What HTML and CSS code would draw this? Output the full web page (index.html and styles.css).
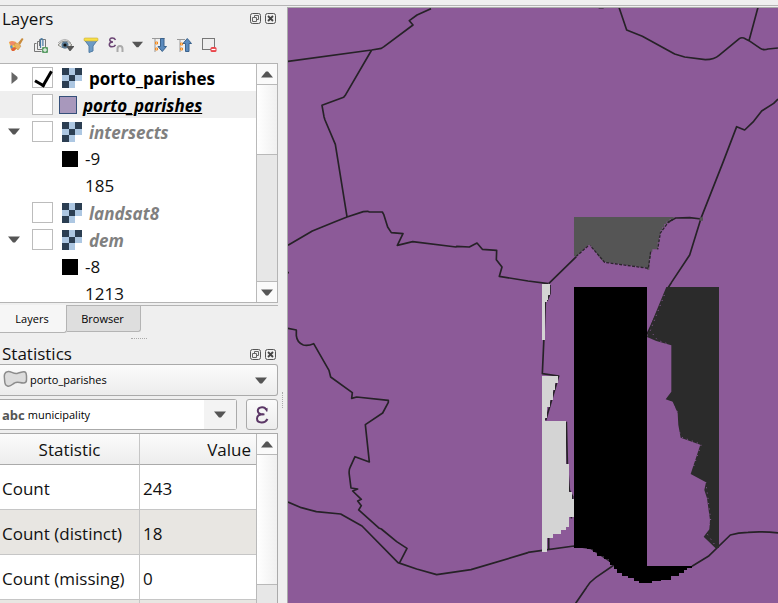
FILE: index.html
```html
<!DOCTYPE html>
<html lang="en">
<head>
<meta charset="utf-8">
<title>Layers and statistics</title>
<link rel="stylesheet" href="styles.css">
</head>
<body>
<svg class="defs" aria-hidden="true">
  <symbol id="raster" viewBox="0 0 20 20" shape-rendering="crispEdges"><path fill="#adc7e2" d="M0 0h20v13h-7v7H0z"/><path fill="#2b3e52" d="M0 0h7v7H0zM13 0h7v7h-7zM7 7h6v6H7zM0 13h7v7H0z"/></symbol>
  <symbol id="float" viewBox="0 0 11 11"><rect x=".5" y=".5" width="10" height="10" rx="2" fill="none" stroke="#555"/><path d="M4.500 4.500v-2h4v4h-2M2.500 4.500h4v4h-4z" fill="none" stroke="#666"/></symbol>
  <symbol id="close" viewBox="0 0 11 11"><rect x=".5" y=".5" width="10" height="10" rx="2" fill="none" stroke="#555"/><path d="M3 3l5 5M8 3l-5 5" stroke="#444" stroke-width="1.800"/></symbol>
  <symbol id="down" viewBox="0 0 12 7"><path d="M0 .5h12L7 6.500H5z" fill="#555"/></symbol>
  <symbol id="up" viewBox="0 0 12 7"><path d="M0 6.500h12L7 .5H5z" fill="#555"/></symbol>
  <symbol id="right" viewBox="0 0 7 12"><path d="M.5 0v12L6.500 7V5z" fill="#666"/></symbol>
</svg>
<div class="topbar"></div>
<div class="workspace">
  <aside class="sidebar">
    <section class="dock">
      <header class="dock-title"><h2>Layers</h2>
        <button aria-label="Float layers"><svg><use href="#float"/></svg></button>
        <button aria-label="Close layers"><svg><use href="#close"/></svg></button>
      </header>
      <div class="toolbar">
        <button aria-label="Layer styling"><svg viewBox="0 0 16 16"><path d="M1 5l3-1 4 1 2 6-4 3-3-1z" fill="#f6dc4c"/><path d="M1 5l3-1 4 1-1 3-4 1z" fill="#f08a6a"/><path d="M2 9l2-1 1 3-2 1z" fill="#5c8fc9"/><path d="M3 12l3-2 3 1-3 3-2 0z" fill="#e0603c"/><path d="M6 7l3-1 4 3-3 4q-3-2-4-6z" fill="#eab461" stroke="#c98d45" stroke-width=".6"/><path d="M10 6l4-5 1.500 1-3.500 6z" fill="#c98b3b"/></svg></button>
        <button aria-label="Add group"><svg viewBox="0 0 16 16"><g fill="none" stroke="#777"><path d="M8.500 14.500h-7v-8h2M9 12.500H4.500v-8h2M6.500 9V2.500h6v8"/></g><path d="M7.500 11V3.500q0-2 1.200-2t1.200 2V9" fill="none" stroke="#467ba6" stroke-width="1.200"/><rect x="9" y="10" width="6" height="6" rx="1" fill="#5d9e68"/><path d="M10 13h4M12 11v4" stroke="#fff"/></svg></button>
        <button aria-label="Manage map themes"><svg viewBox="0 0 16 16"><path d="M0 8Q7 0 14 8 7 14 0 8z" fill="#e2e2df" stroke="#8c8c86"/><path d="M0 6Q7-1 13 6" fill="none" stroke="#aaa"/><circle cx="7" cy="8" r="3.500" fill="#587994"/><circle cx="7" cy="8" r="1.600" fill="#111"/><path d="M8 9h8.500l-4 5h-1z" fill="#555"/></svg></button>
        <button aria-label="Filter legend"><svg viewBox="0 0 16 16"><path d="M1.500 3h13L10 9v5l-4 1.500V9z" fill="#6c9ac4" stroke="#507ca5"/><rect x="1" y="1" width="14" height="3" rx="1" fill="#f7df46" stroke="#c9ab35" stroke-width=".6"/></svg></button>
        <button aria-label="Filter by expression" class="expr-filter"><svg viewBox="0 0 16 16"><path d="M7.500 3Q6.500.8 4 1 1.500 1.300 1.800 3.200 2 5 5 5 1.500 5 1.300 7.300 1.200 9.700 4 9.800q2.500 0 3.500-2" fill="none" stroke="#6c4675" stroke-width="1.500"/><path d="M9.500 15v-3q0-3 2.500-3t2.500 3v3" fill="none" stroke="#aaa" stroke-width="2"/></svg></button>
        <button aria-label="Filter options" class="drop"><svg><use href="#down"/></svg></button>
        <button aria-label="Expand all"><svg viewBox="0 0 16 16"><path d="M0 1.500h13M3 2v13" stroke="#999"/><path d="M3.500 5h2v2h-2zM3.500 11h2v2h-2z" fill="#fff2d8" stroke="#f28a20"/><path d="M8.500 1.500H12v8h2.500l-4.250 5-4.250-5h2.500z" fill="#5a8abd" stroke="#3b638d"/></svg></button>
        <button aria-label="Collapse all"><svg viewBox="0 0 16 16"><path d="M0 2.500h8M3 2v13" stroke="#999"/><path d="M3.500 6h2v2h-2zM3.500 11h2v2h-2z" fill="#fff2d8" stroke="#f28a20"/><path d="M8.500 14.500H12v-8h2.500l-4.250-5-4.250 5h2.500z" fill="#5a8abd" stroke="#3b638d"/></svg></button>
        <button aria-label="Remove layer"><svg viewBox="0 0 16 16"><rect x=".5" y="1.500" width="12" height="11" fill="#eee" stroke="#777"/><rect x="8.500" y="10" width="6" height="5" rx="1.500" fill="#e9444a"/><path d="M9.500 12.500h4" stroke="#fff" stroke-width="1.200"/></svg></button>
      </div>
      <div class="tree">
        <ul>
          <li><button class="twist" aria-label="Expand"><svg class="side"><use href="#right"/></svg></button><label><input type="checkbox" checked><svg class="raster"><use href="#raster"/></svg><b>porto_parishes</b></label></li>
          <li class="current"><span class="twist"></span><label><input type="checkbox"><i class="fill"></i><b class="active">porto_parishes</b></label></li>
          <li><button class="twist" aria-label="Collapse"><svg><use href="#down"/></svg></button><label><input type="checkbox"><svg class="raster"><use href="#raster"/></svg><b class="off">intersects</b></label></li>
          <li class="legend"><i class="swatch"></i>-9</li>
          <li class="legend"><i class="swatch none"></i>185</li>
          <li><span class="twist"></span><label><input type="checkbox"><svg class="raster"><use href="#raster"/></svg><b class="off">landsat8</b></label></li>
          <li><button class="twist" aria-label="Collapse"><svg><use href="#down"/></svg></button><label><input type="checkbox"><svg class="raster"><use href="#raster"/></svg><b class="off">dem</b></label></li>
          <li class="legend"><i class="swatch"></i>-8</li>
          <li class="legend"><i class="swatch none"></i>1213</li>
        </ul>
        <div class="scroll"><button aria-label="Scroll up"><svg><use href="#up"/></svg></button><div class="thumb"></div><div class="track"></div><button class="last" aria-label="Scroll down"><svg><use href="#down"/></svg></button></div>
      </div>
      <nav class="tabs"><button class="on">Layers</button><button>Browser</button></nav>
    </section>
    <div class="grip"></div>
    <section class="dock stats">
      <header class="dock-title"><h2>Statistics</h2>
        <button aria-label="Float statistics"><svg><use href="#float"/></svg></button>
        <button aria-label="Close statistics"><svg><use href="#close"/></svg></button>
      </header>
      <div class="combo">
        <svg class="polygon" viewBox="0 0 25 18"><path d="M5 1.500C8 1 10 4 14 3.500 17 3 20 1 22 2c2 1 1.500 5 1.500 8 0 2-1 3-3 3-4 0-6-2-9 0-2 1-4 4-7 3C1 15 2 12 1.500 9 1 6 1 2 5 1.500z" fill="#dcdcdc" stroke="#8c8c8c" stroke-width="1.500"/></svg>
        <select aria-label="Layer"><option>porto_parishes</option></select>
        <svg class="arrow"><use href="#down"/></svg>
      </div>
      <div class="field-row">
        <div class="combo editable"><label for="field">abc</label><input id="field" type="text" value="municipality"><button aria-label="Choose field"><svg class="arrow"><use href="#down"/></svg></button></div>
        <button class="expr" aria-label="Expression"><svg viewBox="0 0 14 18"><path d="M11.500 4Q10 1 7 1.200 2.700 1.400 2.800 5 3 8.300 8.500 8.300 2.200 8.300 2 12.500 2 16.300 6.500 16.500 10.500 16.700 12.500 13" fill="none" stroke="#5b3766" stroke-width="2"/><path d="M11 2.500l1.500-.8V5.500H11zM7.500 7.500h2v1.800h-2z" fill="#5b3766"/></svg></button>
      </div>
      <div class="results">
        <table>
          <thead><tr><th>Statistic</th><th class="value">Value</th></tr></thead>
          <tbody>
            <tr><td>Count</td><td>243</td></tr>
            <tr><td>Count (distinct)</td><td>18</td></tr>
            <tr><td>Count (missing)</td><td>0</td></tr>
            <tr><td></td><td></td></tr>
          </tbody>
        </table>
        <div class="scroll"><button aria-label="Scroll up"><svg><use href="#up"/></svg></button><div class="thumb long"></div><div class="track"></div></div>
      </div>
    </section>
  </aside>
  <div class="splitter"></div>
  <main class="map">
    <svg viewBox="288 8 490 595" preserveAspectRatio="xMinYMin slice" role="img" aria-label="Parish map">
      <rect x="288" y="8" width="490" height="595" fill="#8c5a98"/>
      <g class="borders">
        <g transform="translate(280 0) scale(.33333)">
          <path d="M24 184L275 150 304 145 312 140 399 75 388 62 411 45 453 26M275 150L197 284 191 292 126 316 132 350 135 360 166 433 201 650M24 736L97 693 165 665 201 651 250 635 263 634 268 636 307 636 311 643 323 681 334 698 369 701 352 736 398 725 528 741 530 739 568 741 591 729 607 748 650 751 649 779 666 801 658 829 744 843 805 851M24 818h3"/>
        </g>
        <g transform="translate(528 0) scale(.33333)">
          <path d="M273 22L296 90 343 109 440 162 470 171 532 179Q560 178 573 166L634 116Q642 110 653 117L663 122 697 145Q706 152 720 147L750 144M690 22L663 122M750 297L737 310 701 333 677 364 650 390 626 380 585 487 520 652 485 765 430 848Q411 875 403 906L357 1003M520 657L485 653 443 654 419 667M62 851L145 770M66 855L66 880 58 900 52 906 48 1010 43 1121 92 1128 53 1261M212 23h15"/>
        </g>
        <g transform="translate(280 300) scale(.33333)">
          <path d="M24 85L49 90V107Q51 128 70 135 85 138 101 131L147 211 152 231 217 278 215 295 230 291 325 301V307L308 339 256 374 268 486 225 470 210 503Q206 510 208 525L213 564 233 567 218 573 244 598 233 603 244 617 236 630 298 685 304 687 350 725 381 745 359 788M24 606L64 623 109 635 182 642 246 678 354 788 410 807 470 824 573 809 744 758"/>
        </g>
        <g transform="translate(528 300) scale(.33333)">
          <path d="M0 757L138 738 188 745 330 840M258 795L203 833Q186 845 175 863L143 910M492 799L541 769 607 705Q630 698 660 697 700 693 752 699M62 714V746M115 365L118 490 124 570 134 590 130 655"/>
        </g>
      </g>
      <g transform="translate(528 0) scale(.33333)">
        <path fill="#555" d="M138 651H437V657H425V664H416V672H409V682H403V691H397V705H393V727H389V748H373V755H368V775H364V809H357V803L291 794 228 785 222 781 187 736H180L145 769H138zM515 652h10v10h-10z"/>
        <path fill="none" stroke="#2a252b" stroke-width="4" stroke-dasharray="9 4" d="M437 657L420 668 397 699 389 748M368 755L361 805 230 787 187 737M180 738L145 769"/>
        <path fill="#2b2b2b" d="M415 861H573V1644H562L527 1610 544 1588 546 1560 537 1495 529 1470 534 1447 488 1422 517 1334 458 1313 451 1275 449 1239 434 1205 413 1198 430 1175V1036L385 1023 357 1011 372 965 405 885z"/>
        <path fill="none" stroke="#8c5a98" stroke-width="3" stroke-dasharray="3 13" d="M409 885L367 992 389 1021 424 1033M430 1205L448 1235M455 1297L462 1312 520 1333 493 1410M533 1446L538 1480 548 1560 537 1601 563 1638"/>
      </g>
      <g transform="translate(528 0) scale(.33333)" shape-rendering="crispEdges">
        <path fill="#d4d4d4" d="M42 852H67V885H60V900H58V906H51V1020H42zM42 1128H90V1149H82V1170H75V1200H67V1220H58V1254H52V1263H115V1391H123V1475H131V1497H137V1551H123V1582H115V1590H99V1602H75V1613H58V1655H42z"/>
        <path fill="#000" d="M138 861H357V1698H491V1704H476V1711H467V1720H453V1728H429V1740H398V1744H372V1749H334V1743H318V1734H300V1727H283V1719H268V1707H257V1696H246V1686H244V1678H229V1667H207V1655H195V1647H177V1643H138z"/>
      </g>
    </svg>
  </main>
</div>
</body>
</html>
```
FILE: styles.css
```css
* { box-sizing: border-box; }
body {
  margin: 0;
  height: 100vh;
  display: flex;
  flex-direction: column;
  overflow: hidden;
  background: #efefef;
  color: #111;
  font: 17px/24px "Open Sans", "Noto Sans", sans-serif;
}
button, input, select { font: inherit; color: inherit; margin: 0; }
button { padding: 0; border: 0; background: none; display: flex; align-items: center; justify-content: center; }
svg { display: block; width: 12px; height: 7px; flex: none; }
.defs { position: absolute; width: 0; height: 0; }
.topbar { height: 6px; flex: none; border-bottom: 1px solid #b4b4b4; }
.workspace { flex: 1; min-height: 0; display: flex; }
.sidebar { width: 278px; flex: none; display: flex; flex-direction: column; min-height: 0; }

.dock-title { display: flex; align-items: center; gap: 4px; height: 25px; padding: 0 2px; }
.dock-title h2 { flex: 1; margin: 0; font-size: 17px; font-weight: 400; }
.dock-title svg { width: 11px; height: 11px; }

.toolbar { display: flex; align-items: center; gap: 9px; height: 32px; padding: 0 8px 5px; }
.toolbar button, .toolbar button svg { width: 16px; height: 16px; }
.toolbar .drop { width: 12px; margin-left: -2px; }
.toolbar .drop svg { width: 11px; height: 7px; }

.tree { display: flex; height: 240px; overflow: hidden; background: #fff; border: 1px solid #b4b4b4; border-left: 0; }
.tree ul { flex: 1; margin: 0; padding: 0; list-style: none; }
.tree li { display: flex; align-items: center; height: 27px; }
.tree label { display: flex; align-items: center; }
.tree b { padding-top: 2px; color: #000; }
.tree .current { background: #efefef; }
.twist { width: 32px; flex: none; }
.tree button.twist { padding-right: 4px; }
.twist .side { width: 7px; height: 12px; }
.tree input { appearance: none; width: 21px; height: 21px; border: 1px solid #bcbcbc; background: #fff; }
.tree input:checked { position: relative; }
.tree input:checked::after { content: ""; position: absolute; left: 5px; top: 0; width: 8px; height: 15px; border: solid #000; border-width: 0 3px 3px 0; transform: rotate(30deg); }
.raster { width: 20px; height: 20px; margin: 0 7px 0 9px; }
.fill { width: 18px; height: 18px; margin: 0 6px; background: #a898bc; border: 1px solid #35507a; }
.tree .active { font-style: italic; text-decoration: underline; }
.tree .off { font-style: italic; color: #808080; }
.legend { padding-left: 62px; }
.swatch { width: 16px; height: 16px; margin-right: 7px; background: #000; }
.swatch.none { background: none; }

.scroll { width: 21px; flex: none; display: flex; flex-direction: column; border-left: 1px solid #b9b9b9; background: #e7e7e7; }
.scroll button { height: 21px; flex: none; border-bottom: 1px solid #b9b9b9; background: #fafafa; }
.scroll button.last { border: solid #b9b9b9; border-width: 1px 0 0; }
.thumb { height: 70px; flex: none; border-bottom: 1px solid #b9b9b9; background: linear-gradient(90deg, #fff, #f0f0f0); }
.thumb.long { height: 130px; }
.track { flex: 1; }

.tabs { display: flex; align-items: flex-start; margin-top: 2px; border-top: 1px solid #b4b4b4; font-size: 11px; line-height: 16px; color: #000; }
.tabs button { height: 26px; width: 74px; padding-right: 2px; border: 1px solid #b4b4b4; border-width: 0 1px 1px 0; border-radius: 0 0 3px 0; background: #dedede; }
.tabs .on { width: 67px; height: 28px; margin-top: -1px; background: #f6f6f6; }
.grip { width: 16px; height: 1px; flex: none; margin: 5px auto; border-top: 1px dotted #aaa; }

.stats { flex: 1; min-height: 0; display: flex; flex-direction: column; }
.stats .dock-title { height: 20px; flex: none; }
.combo { display: flex; align-items: center; height: 32px; flex: none; border: 1px solid #aaa; border-left: 0; border-radius: 0 3px 3px 0; background: linear-gradient(#fbfbfb, #ececec); font-size: 11px; line-height: 16px; color: #000; }
.combo select { appearance: none; flex: 1; min-width: 0; padding: 0 2px; border: 0; background: none; }
.combo .arrow { margin-right: 10px; }
.polygon { width: 25px; height: 18px; margin: 0 0 3px 3px; }
.field-row { display: flex; gap: 9px; margin: 3px 0; flex: none; }
.editable { flex: 1; height: 31px; min-width: 0; background: #fff; }
.editable label { padding-left: 2px; font-size: 13px; font-weight: 700; color: #555; }
.editable input { flex: 1; min-width: 0; height: 100%; padding: 0 3px; border: 0; background: none; outline: 0; }
.editable button { width: 32px; height: 100%; background: #f3f3f3; }
.editable .arrow { margin: 0; }
.expr { width: 32px; border: 1px solid #aaa; border-radius: 3px; background: linear-gradient(#fbfbfb, #ececec); }
.expr svg { width: 14px; height: 18px; }

.results { flex: 1; min-height: 0; display: flex; align-items: stretch; overflow: hidden; border: 1px solid #aaa; border-width: 1px 1px 0 0; background: #fff; }
.results table { flex: 1; align-self: flex-start; border-collapse: separate; border-spacing: 0; table-layout: fixed; width: 100%; }
th { height: 31px; padding: 2px 5px 0; font-weight: 400; background: linear-gradient(#fcfcfc, #ededed); border-bottom: 1px solid #aaa; border-right: 1px solid #c6c6c6; }
th:first-child { width: 140px; }
th.value { text-align: right; }
td { height: 45px; padding: 3px 3px 0 2px; border-bottom: 1px solid #c6c6c6; border-right: 1px solid #c6c6c6; }
td + td { padding-left: 3px; }
th:last-child, td:last-child { border-right: 0; }
tbody tr:nth-child(even) { background: #e8e6e2; }

.splitter { width: 9px; flex: none; display: flex; align-items: center; justify-content: center; padding-top: 190px; }
.splitter::after { content: ""; height: 16px; border-left: 1px dotted #aaa; }
.map { flex: 1; min-width: 0; margin-top: 1px; border: solid #aaa; border-width: 1px 0 0 1px; }
.map svg { width: 100%; height: 100%; }
.borders path { fill: none; stroke: #262227; stroke-width: 5; stroke-linejoin: round; }
```
